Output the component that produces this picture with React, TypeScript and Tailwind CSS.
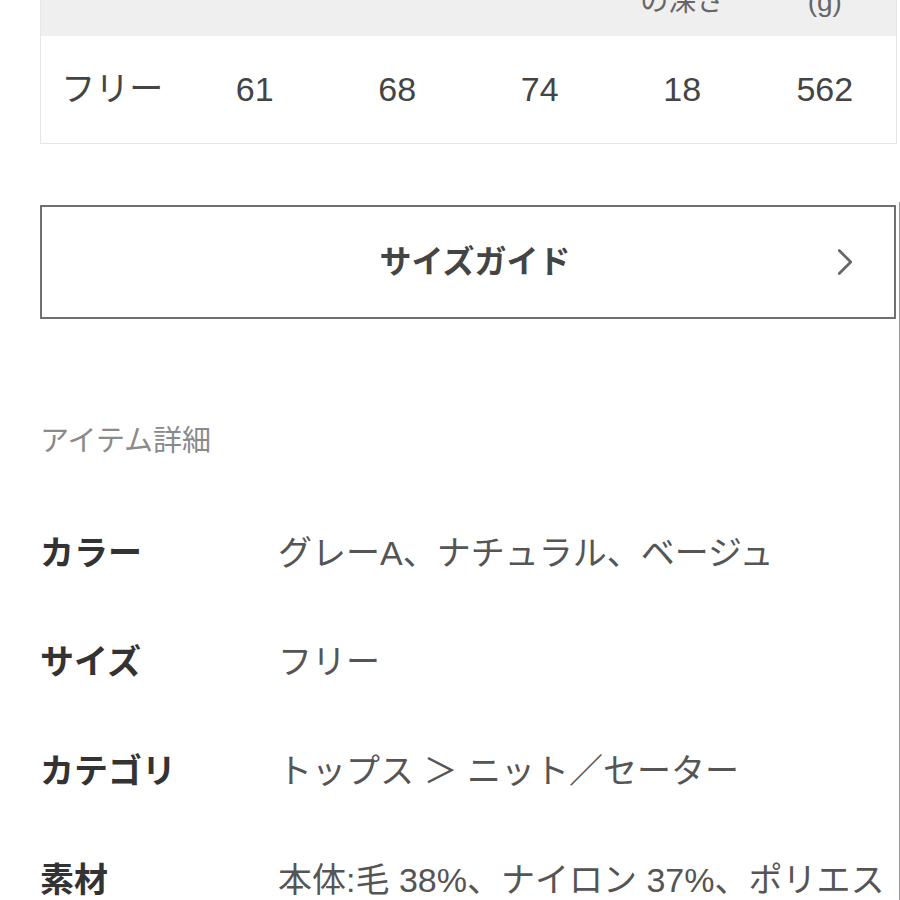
import { ChevronRight } from "lucide-react"

// only the second header line is visible in the crop
const heads = ["", "", "", "", "の深さ", "(g)"]

const row = ["フリー", "61", "68", "74", "18", "562"]

const details = [
  { label: "カラー", value: "グレーA、ナチュラル、ベージュ" },
  { label: "サイズ", value: "フリー" },
  { label: "カテゴリ", value: "トップス ＞ ニット／セーター" },
  { label: "素材", value: "本体:毛 38%、ナイロン 37%、ポリエステル 25%" },
]

export default function App() {
  return (
    <div className="w-[900px] h-[900px] overflow-hidden bg-white font-['Liberation_Sans','Noto_Sans_CJK_JP',sans-serif]">
      {/* size table */}
      <div className="ml-[40px] mr-[3px] border-x border-b border-[#e6e6e6]">
        <div className="grid grid-cols-6 h-[36px] overflow-hidden bg-[#efefef]">
          {heads.map((h, i) => (
            <div key={i} className="mt-[-16px] text-center text-[28px] leading-[36px] text-[#666]">
              {h || "\u00a0"}
            </div>
          ))}
        </div>
        <div className="grid grid-cols-6 h-[107px] items-center">
          {row.map((v, i) => (
            <div key={i} className="text-center text-[34px] text-[#444]">{v}</div>
          ))}
        </div>
      </div>

      <div className="border-r border-[#9a9a9a] mt-[58px] pt-[3px] pl-[40px] pr-[3px]">
        {/* size guide button */}
        <div className="relative flex items-center justify-center h-[114px] border-2 border-[#707070] pl-[14px]">
          <span className="text-[32px] font-bold text-[#444]">サイズガイド</span>
          <ChevronRight className="absolute right-[26px] top-1/2 -translate-y-1/2 text-[#666]" size={46} strokeWidth={1.4} />
        </div>

        <div className="mt-[102px] text-[29px] leading-[40px] text-[#8a8a8a]">アイテム詳細</div>

        <div className="mt-[38px]">
          {details.map((d, i) => (
            <div key={i} className="flex py-[32px] text-[34px] leading-[45px]">
              <div className="w-[238px] shrink-0 font-bold text-[#333]">{d.label}</div>
              <div className="text-[#555]">{d.value}</div>
            </div>
          ))}
        </div>
      </div>
    </div>
  )
}
